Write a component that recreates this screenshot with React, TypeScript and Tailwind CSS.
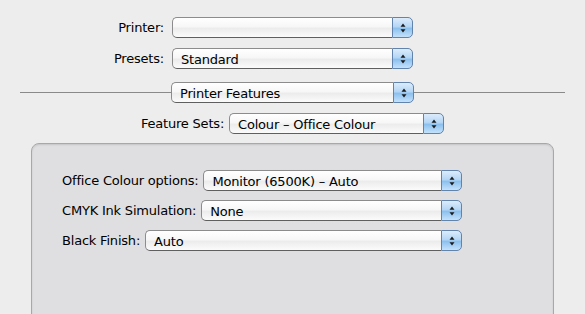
import React from "react";

function Stepper() {
  return (
    <div className="relative h-full w-[21px] shrink-0 rounded-r-[5px] border border-[#6283ab] bg-[linear-gradient(to_bottom,#dcecfb_0%,#b4d6f5_45%,#8cc0ef_55%,#c4e2fb_100%)] flex items-center justify-center">
      <svg width="6" height="10" viewBox="0 0 6 10">
        <polygon points="3,0.5 5.5,3.8 0.5,3.8" fill="#1a1a1a" />
        <polygon points="0.5,6.2 5.5,6.2 3,9.5" fill="#1a1a1a" />
      </svg>
    </div>
  );
}

function Popup({ value, className = "" }: { value: string; className?: string }) {
  return (
    <div className={`flex h-[21px] ${className}`}>
      <div className="flex-1 min-w-0 flex items-center pl-[8px] pt-px rounded-l-[5px] border border-r-0 border-[#8c8c8c] border-b-[#5f5f5f] bg-[linear-gradient(to_bottom,#ffffff_0%,#f7f7f7_45%,#ececec_55%,#fbfbfb_100%)] text-[13px] text-black leading-none whitespace-nowrap">
        {value}
      </div>
      <Stepper />
    </div>
  );
}

export default function App() {
  return (
    <div
      className="relative w-[585px] h-[314px] overflow-hidden bg-[#ededed] text-[13px] tracking-[-0.2px] text-black"
      style={{ fontFamily: '"Lucida Grande", "DejaVu Sans", sans-serif' }}
    >
      <div className="flex flex-col pt-[17px]">
        <div className="flex items-center h-[21px]">
          <div className="w-[164px] text-right">Printer:</div>
          <Popup value="" className="ml-[8px] w-[241px]" />
        </div>
        <div className="flex items-center h-[21px] mt-[10px]">
          <div className="w-[164px] text-right">Presets:</div>
          <Popup value="Standard" className="ml-[8px] w-[241px]" />
        </div>
        <div className="flex items-center h-[21px] mt-[13px] px-[20px]">
          <div className="flex-1 h-px bg-[#8a8a8a]" />
          <Popup value="Printer Features" className="w-[243px]" />
          <div className="flex-1 h-px bg-[#8a8a8a]" />
        </div>
        <div className="flex items-center justify-center h-[21px] mt-[10px] gap-[5px]">
          <div>Feature Sets:</div>
          <Popup value="Colour – Office Colour" className="w-[215px]" />
        </div>
        <div className="mx-[31px] mt-[9px] h-[200px] rounded-t-[8px] border border-[#a8a8a8] bg-[#dfdfe2] shadow-[inset_0_1px_2px_rgba(0,0,0,0.12)] pt-[26px] pl-[30px]">
          <div className="w-[400px] flex flex-col gap-[9px]">
            <div className="flex items-center h-[21px] gap-[5px]">
              <div className="whitespace-nowrap">Office Colour options:</div>
              <Popup value="Monitor (6500K) – Auto" className="flex-1" />
            </div>
            <div className="flex items-center h-[21px] gap-[5px]">
              <div className="whitespace-nowrap">CMYK Ink Simulation:</div>
              <Popup value="None" className="flex-1" />
            </div>
            <div className="flex items-center h-[21px] gap-[5px]">
              <div className="whitespace-nowrap">Black Finish:</div>
              <Popup value="Auto" className="flex-1" />
            </div>
          </div>
        </div>
      </div>
    </div>
  );
}
